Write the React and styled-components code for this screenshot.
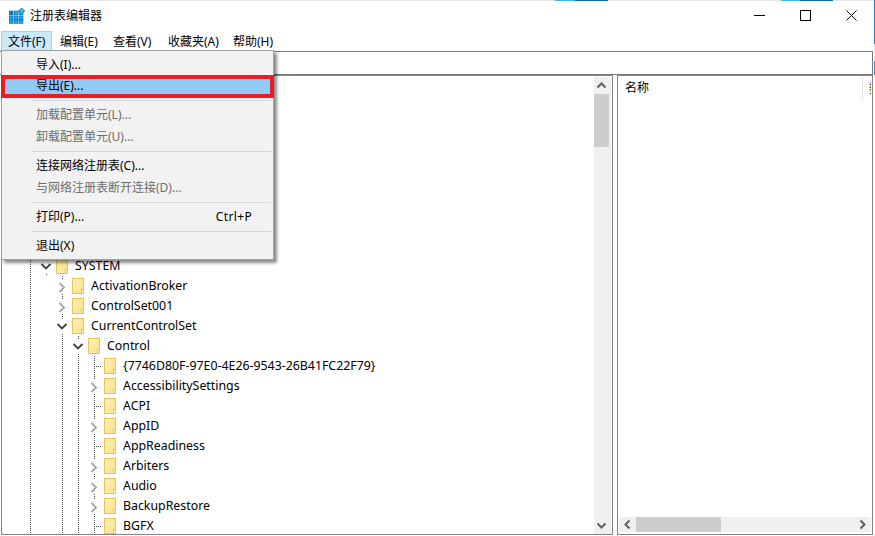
import React from "react";
import styled, { createGlobalStyle } from "styled-components";

const Global = createGlobalStyle`
  html, body { margin: 0; padding: 0; background: #fff; overflow: hidden; }
  * { box-sizing: border-box; }
`;

const FONT = `"Noto Sans", "Noto Sans CJK SC", sans-serif`;

const Window = styled.div`
  width: 875px;
  height: 536px;
  display: flex;
  flex-direction: column;
  background: #fff;
  font: 12px/16px ${FONT};
  color: #000;
  position: relative;
  overflow: hidden;
  border-right: 1px solid #fff;
  border-image: linear-gradient(to bottom, #3a7fc0 0 45px, #e8e8e8 45px 62px, #3a7fc0 62px 76px, #ffffff 76px) 1;
`;

const DesktopStrip = styled.div`
  height: 1px;
  flex: none;
  background: linear-gradient(
    to right,
    #e6e6e6 0 555px,
    #41b8ea 555px 575px,
    #0b6f9e 575px 608px,
    #e6e6e6 608px 781px,
    #41b8ea 781px 800px,
    #0b6f9e 800px 833px,
    #e6e6e6 833px
  );
`;

const TitleBar = styled.div`
  height: 29px;
  flex: none;
  display: flex;
  align-items: center;
  padding-left: 9px;
`;

const TitleText = styled.span`
  margin-left: 5px;
  font-size: 12px;
  flex: 1;
`;

const WindowButton = styled.div`
  width: 46px;
  height: 29px;
  display: flex;
  align-items: center;
  justify-content: center;
`;

const MenuBar = styled.div`
  height: 21px;
  flex: none;
  display: flex;
  align-items: center;
  position: relative;
  padding-left: 1px;
`;

const MenuTitle = styled.div`
  height: 20px;
  width: ${(p) => p.$w}px;
  padding-left: ${(p) => (p.$open ? 6 : 7)}px;
  line-height: 19px;
  white-space: nowrap;
  border: 1px solid ${(p) => (p.$open ? "#99d1ff" : "transparent")};
  background: ${(p) => (p.$open ? "#cce8ff" : "transparent")};
`;

const Dropdown = styled.div`
  position: absolute;
  left: 1px;
  top: 20px;
  width: 273px;
  height: 210px;
  padding: 3px 1px 0;
  background: #f2f2f2;
  border: 1px solid #a0a0a0;
  box-shadow: 3px 3px 3px rgba(0, 0, 0, 0.45);
  z-index: 5;
`;

const MenuItem = styled.div`
  height: 21.6px;
  display: flex;
  align-items: center;
  justify-content: space-between;
  padding: 0 20px 0 ${(p) => (p.$active ? 34 : 33)}px;
  margin: 0 ${(p) => (p.$active ? -1 : 0)}px;
  white-space: nowrap;
  color: ${(p) => (p.$disabled ? "#6d6d6d" : "#000")};
  background: ${(p) => (p.$active ? "#91c9f7" : "transparent")};
  outline: ${(p) => (p.$active ? "4px solid #ed1c24" : "none")};
  outline-offset: -3px;
  position: relative;
`;

const Shortcut = styled.span`
  letter-spacing: 0.35px;
`;

const MenuSeparator = styled.div`
  height: 7.4px;
  margin-left: 29px;
  margin-right: 1px;
  display: flex;
  align-items: center;
  &::after {
    content: "";
    flex: 1;
    height: 1px;
    background: #d7d7d7;
  }
`;

const AddressRow = styled.div`
  height: 24px;
  flex: none;
  margin-right: 1px;
  background: #fff;
  border: 1px solid #7a7a7a;
  border-left: none;
`;

const Panes = styled.div`
  flex: 1;
  min-height: 0;
  display: flex;
  padding: 0 1px 1px 1px;
  gap: 4px;
`;

const Pane = styled.div`
  border: 1px solid #82828a;
  display: flex;
  min-width: 0;
  background: #fff;
`;

const TreePane = styled(Pane)`
  width: 612px;
  flex: none;
`;

const Tree = styled.div`
  flex: 1;
  min-width: 0;
  overflow: hidden;
  padding: 180px 0 0 20px;
`;

const Row = styled.div`
  height: 20px;
  display: flex;
  align-items: center;
`;

const dots = "repeating-linear-gradient(to bottom, #4a4a4a 0 1px, transparent 1px 2px)";
const hdots = "repeating-linear-gradient(to right, #4a4a4a 0 1px, transparent 1px 2px)";

const Cell = styled.div`
  width: 16px;
  height: 20px;
  flex: none;
  display: flex;
  align-items: center;
  justify-content: center;
  background-repeat: no-repeat;
  background-image: ${(p) =>
    p.$kind === "none" ? "none" : p.$kind === "leaf" ? `${dots}, ${hdots}` : dots};
  background-size: ${(p) => (p.$kind === "leaf" ? "1px 100%, 8px 1px" : "1px 100%")};
  background-position: ${(p) => (p.$kind === "leaf" ? "8px 0, 8px 10px" : "8px 0")};
`;

const ChevronSvg = styled.svg`
  display: block;
  background: #fff;
`;

const Label = styled.span`
  margin-left: 7px;
  font-size: 12.35px;
  white-space: nowrap;
`;

const FolderSvg = styled.svg`
  display: block;
  margin-left: 2px;
  flex: none;
`;

const VScroll = styled.div`
  width: 17px;
  flex: none;
  display: flex;
  flex-direction: column;
  background: #f0f0f0;
  margin-top: 1px;
  margin-right: 1px;
`;

const ScrollArrow = styled.div`
  width: ${(p) => (p.$h ? "17px" : "15px")};
  height: ${(p) => (p.$h ? "15px" : "17px")};
  flex: none;
  display: flex;
  align-items: center;
  justify-content: center;
`;

const VThumb = styled.div`
  height: 53px;
  width: 15px;
  flex: none;
  background: #cdcdcd;
`;

const ScrollSpacer = styled.div`
  flex: 1;
`;

const ListPane = styled(Pane)`
  flex: 1;
  flex-direction: column;
  padding: 1px 1px 1px 1px;
`;

const ListHeader = styled.div`
  height: 24px;
  flex: none;
  display: flex;
  align-items: center;
  overflow: hidden;
`;

const HeaderCell = styled.div`
  width: ${(p) => p.$w}px;
  flex: none;
  height: 100%;
  padding-left: 6px;
  line-height: 22px;
  white-space: nowrap;
  border-right: 1px solid #e5e5e5;
`;

const HeaderClip = styled.div`
  flex: 1;
  min-width: 0;
  overflow: hidden;
  padding-left: 6px;
  line-height: 22px;
  white-space: nowrap;
`;

const ListBody = styled.div`
  flex: 1;
`;

const HScroll = styled.div`
  height: 15px;
  flex: none;
  display: flex;
  background: #f0f0f0;
  margin-bottom: 1px;
`;

const HThumb = styled.div`
  width: 85px;
  flex: none;
  background: #cdcdcd;
`;

const AppIcon = () => (
  <svg width="16" height="16" viewBox="0 0 16 16">
    {[0, 5, 10].map((x) =>
      [3, 8, 12].map((y) => (
        <rect key={`${x}-${y}`} x={x} y={y} width="4" height={y === 12 ? 3.5 : 4} fill={y === 3 && x === 0 ? "#0b7fc4" : "#1fa9e8"} stroke="#0a6ca8" strokeWidth="0.6" />
      ))
    )}
    <path d="M12.5 0 L15.8 3 L12.5 6 L9.5 3 Z" fill="#3ab4e6" stroke="#0b6a9e" strokeWidth="0.7" />
  </svg>
);

const Chevron = ({ down }) =>
  down ? (
    <ChevronSvg width="14" height="13" viewBox="0 0 14 13">
      <path d="M2.5 4 L7 8.5 L11.5 4" fill="none" stroke="#404040" strokeWidth="1.8" />
    </ChevronSvg>
  ) : (
    <ChevronSvg width="14" height="13" viewBox="0 0 14 13">
      <path d="M4.5 3 L9 7.5 L4.5 12" fill="none" stroke="#a6a6a6" strokeWidth="1.8" />
    </ChevronSvg>
  );

const Folder = () => (
  <FolderSvg width="12" height="16" viewBox="0 0 12 16">
    <defs>
      <linearGradient id="fold" x1="0" y1="0" x2="1" y2="1">
        <stop offset="0" stopColor="#fdf0b8" />
        <stop offset="1" stopColor="#fde08a" />
      </linearGradient>
    </defs>
    <rect x="0.5" y="0.5" width="11" height="15" fill="url(#fold)" stroke="#ecc44f" />
    <rect x="9.5" y="11.5" width="2" height="4" fill="#fff6d0" stroke="#ecc44f" />
  </FolderSvg>
);

const Tri = ({ d }) => (
  <svg width="11" height="11" viewBox="0 0 11 11">
    <path d={d} fill="none" stroke="#606060" strokeWidth="2" />
  </svg>
);

const L = "line";
const N = "none";
const rows = [
  { label: "SYSTEM", cells: [L], chevron: "down" },
  { label: "ActivationBroker", cells: [L, N], chevron: "right" },
  { label: "ControlSet001", cells: [L, N], chevron: "right" },
  { label: "CurrentControlSet", cells: [L, N], chevron: "down" },
  { label: "Control", cells: [L, N, L], chevron: "down" },
  { label: "{7746D80F-97E0-4E26-9543-26B41FC22F79}", cells: [L, N, L, L], chevron: "leaf" },
  { label: "AccessibilitySettings", cells: [L, N, L, L], chevron: "right" },
  { label: "ACPI", cells: [L, N, L, L], chevron: "leaf" },
  { label: "AppID", cells: [L, N, L, L], chevron: "right" },
  { label: "AppReadiness", cells: [L, N, L, L], chevron: "leaf" },
  { label: "Arbiters", cells: [L, N, L, L], chevron: "right" },
  { label: "Audio", cells: [L, N, L, L], chevron: "right" },
  { label: "BackupRestore", cells: [L, N, L, L], chevron: "right" },
  { label: "BGFX", cells: [L, N, L, L], chevron: "leaf" },
];

const menuTitles = [
  { t: "文件(F)", w: 51 },
  { t: "编辑(E)", w: 53 },
  { t: "查看(V)", w: 55 },
  { t: "收藏夹(A)", w: 65 },
  { t: "帮助(H)", w: 60 },
];

export default function App() {
  return (
    <Window>
      <Global />
      <DesktopStrip />
      <TitleBar>
        <AppIcon />
        <TitleText>注册表编辑器</TitleText>
        <WindowButton>
          <svg width="11" height="11" viewBox="0 0 11 11"><path d="M0 5.5H11" stroke="#000" /></svg>
        </WindowButton>
        <WindowButton>
          <svg width="11" height="11" viewBox="0 0 11 11"><rect x="0.5" y="0.5" width="10" height="10" fill="none" stroke="#000" /></svg>
        </WindowButton>
        <WindowButton>
          <svg width="11" height="11" viewBox="0 0 11 11"><path d="M0.5 0.5L10.5 10.5M10.5 0.5L0.5 10.5" stroke="#000" /></svg>
        </WindowButton>
      </TitleBar>
      <MenuBar>
        {menuTitles.map((m, i) => (
          <MenuTitle key={m.t} $w={m.w} $open={i === 0}>{m.t}</MenuTitle>
        ))}
        <Dropdown>
          <MenuItem>导入(I)...</MenuItem>
          <MenuItem $active>导出(E)...</MenuItem>
          <MenuSeparator />
          <MenuItem $disabled>加载配置单元(L)...</MenuItem>
          <MenuItem $disabled>卸载配置单元(U)...</MenuItem>
          <MenuSeparator />
          <MenuItem>连接网络注册表(C)...</MenuItem>
          <MenuItem $disabled>与网络注册表断开连接(D)...</MenuItem>
          <MenuSeparator />
          <MenuItem><span>打印(P)...</span><Shortcut>Ctrl+P</Shortcut></MenuItem>
          <MenuSeparator />
          <MenuItem>退出(X)</MenuItem>
        </Dropdown>
      </MenuBar>
      <AddressRow />
      <Panes>
        <TreePane>
          <Tree>
            {rows.map((r) => (
              <Row key={r.label}>
                {r.cells.map((c, i) => (
                  <Cell key={i} $kind={c} />
                ))}
                <Cell $kind={r.chevron === "leaf" ? "leaf" : "line"}>
                  {r.chevron !== "leaf" && <Chevron down={r.chevron === "down"} />}
                </Cell>
                <Folder />
                <Label>{r.label}</Label>
              </Row>
            ))}
          </Tree>
          <VScroll>
            <ScrollArrow><Tri d="M1.5 7.5 L5.5 3.5 L9.5 7.5" /></ScrollArrow>
            <VThumb />
            <ScrollSpacer />
            <ScrollArrow><Tri d="M1.5 3.5 L5.5 7.5 L9.5 3.5" /></ScrollArrow>
          </VScroll>
        </TreePane>
        <ListPane>
          <ListHeader>
            <HeaderCell $w={244}>名称</HeaderCell>
            <HeaderClip>数据</HeaderClip>
          </ListHeader>
          <ListBody />
          <HScroll>
            <ScrollArrow $h><Tri d="M7.5 1.5 L3.5 5.5 L7.5 9.5" /></ScrollArrow>
            <HThumb />
            <ScrollSpacer />
            <ScrollArrow $h><Tri d="M3.5 1.5 L7.5 5.5 L3.5 9.5" /></ScrollArrow>
          </HScroll>
        </ListPane>
      </Panes>
    </Window>
  );
}
